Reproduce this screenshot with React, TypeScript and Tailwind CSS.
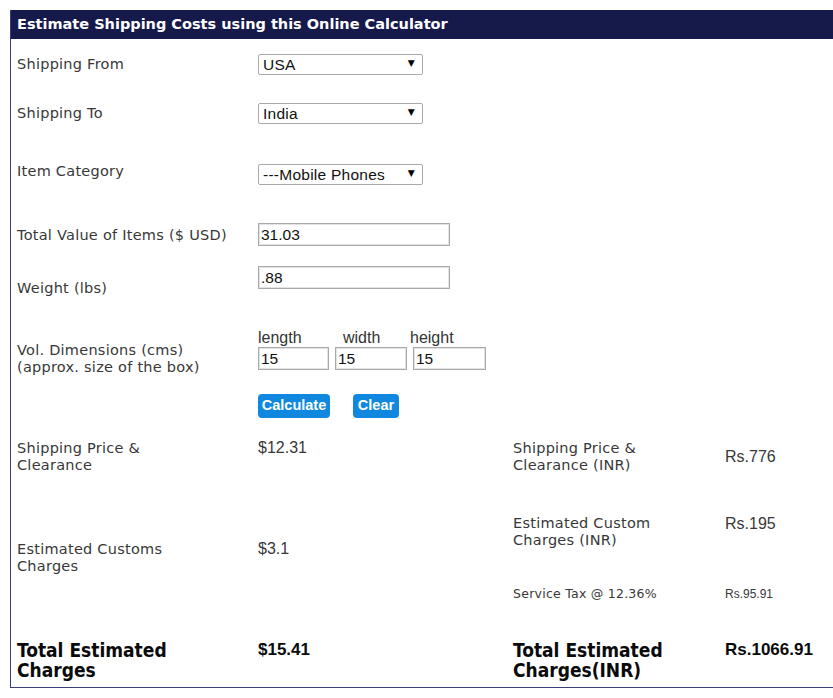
import React from 'react';

const verdana = { fontFamily: '"DejaVu Sans", Verdana, sans-serif' };

function Select({ value }: { value: string }) {
  return (
    <div className="relative w-[165px] h-[21px]">
      <select
        defaultValue={value}
        className="appearance-none w-full h-full border border-[#a9a9a9] rounded-[2px] bg-white pl-[4px] text-[15.5px] leading-[19px] text-[#111] font-['Liberation_Sans',Arial,sans-serif] outline-none"
      >
        <option>{value}</option>
      </select>
      <span className="absolute right-[8px] top-[5px] text-[9px] leading-none text-black pointer-events-none">▼</span>
    </div>
  );
}

function TextInput({ value, w }: { value: string; w: string }) {
  return (
    <input
      defaultValue={value}
      className={`${w} h-[23px] border border-[#a9a9a9] shadow-[inset_0_0_0_1px_#e3e3e3] bg-white pl-[2px] text-[15.5px] leading-[21px] text-[#111] font-['Liberation_Sans',Arial,sans-serif] outline-none`}
    />
  );
}

export default function App() {
  return (
    <div className="w-[833px] h-[698px] overflow-hidden bg-white">
      <div className="mt-[10px] ml-[10px] w-[900px] border border-t-0 border-[#3a3e78]">
        {/* Header */}
        <div className="h-[29px] bg-[#161a4b] flex items-center pl-[6px]">
          <span className="text-white font-bold text-[14.5px]" style={verdana}>
            Estimate Shipping Costs using this Online Calculator
          </span>
        </div>

        <div className="pl-[6px] text-[#383838] text-[14.5px] tracking-[0.25px]" style={verdana}>
          {/* Form rows */}
          <div className="flex h-[45px] items-start">
            <div className="w-[241px] mt-[16px] leading-[18px]">Shipping From</div>
            <div className="mt-[15px]"><Select value="USA" /></div>
          </div>
          <div className="flex h-[60px] items-start">
            <div className="w-[241px] mt-[20px] leading-[18px]">Shipping To</div>
            <div className="mt-[19px]"><Select value="India" /></div>
          </div>
          <div className="flex h-[66px] items-start">
            <div className="w-[241px] mt-[18px] leading-[18px]">Item Category</div>
            <div className="mt-[20px]"><Select value="---Mobile Phones" /></div>
          </div>
          <div className="flex h-[45px] items-start">
            <div className="w-[241px] mt-[16px] leading-[18px]">Total Value of Items ($ USD)</div>
            <div className="mt-[13px] tracking-normal"><TextInput value="31.03" w="w-[192px]" /></div>
          </div>
          <div className="flex h-[60px] items-start">
            <div className="w-[241px] mt-[24px] leading-[18px]">Weight (lbs)</div>
            <div className="mt-[11px] tracking-normal"><TextInput value=".88" w="w-[192px]" /></div>
          </div>
          <div className="flex h-[70px] items-start">
            <div className="w-[241px] mt-[27px] leading-[17px]">
              Vol. Dimensions (cms)
              <br />
              (approx. size of the box)
            </div>
            <div className="mt-[14px] flex gap-[6px] tracking-normal font-['Liberation_Sans',Arial,sans-serif] text-[16px] text-[#333]">
              <div className="flex flex-col">
                <span className="leading-[18px]">length</span>
                <TextInput value="15" w="w-[71px]" />
              </div>
              <div className="flex flex-col">
                <span className="leading-[18px] pl-[8px]">width</span>
                <TextInput value="15" w="w-[72px]" />
              </div>
              <div className="flex flex-col">
                <span className="leading-[18px] -ml-[3px]">height</span>
                <TextInput value="15" w="w-[73px]" />
              </div>
            </div>
          </div>
          <div className="flex h-[55px] items-start">
            <div className="w-[241px]" />
            <div className="mt-[9px] flex gap-[23px] tracking-normal font-['Liberation_Sans',Arial,sans-serif]">
              <button className="h-[24px] w-[72px] rounded-[4px] bg-[#1088e0] text-white font-bold text-[14.5px]">Calculate</button>
              <button className="h-[24px] w-[46px] rounded-[4px] bg-[#1088e0] text-white font-bold text-[14.5px]">Clear</button>
            </div>
          </div>

          {/* Results */}
          <div className="flex pb-[7px]">
            <div className="w-[496px] flex flex-col">
              <div className="flex h-[101px] items-start">
                <div className="w-[241px] leading-[17px]">Shipping Price &amp;<br />Clearance</div>
                <div className="-mt-[1px] text-[16px] leading-[17px] tracking-normal font-['Liberation_Sans',Arial,sans-serif]">$12.31</div>
              </div>
              <div className="flex h-[99px] items-start">
                <div className="w-[241px] leading-[17px]">Estimated Customs<br />Charges</div>
                <div className="-mt-[1px] text-[16px] leading-[17px] tracking-normal font-['Liberation_Sans',Arial,sans-serif]">$3.1</div>
              </div>
              <div className="flex h-[40px] items-start text-[#0a0a0a] tracking-normal">
                <div className="w-[241px] font-bold text-[19px] leading-[20px] font-['DejaVu_Sans_Condensed','DejaVu_Sans',sans-serif]">
                  Total Estimated<br />Charges
                </div>
                <div className="font-bold text-[17px] leading-[20px] font-['Liberation_Sans',Arial,sans-serif]">$15.41</div>
              </div>
            </div>

            <div className="flex flex-col">
              <div className="flex h-[75px] items-start">
                <div className="w-[212px] leading-[17px]">Shipping Price &amp;<br />Clearance (INR)</div>
                <div className="h-[34px] flex items-center text-[16px] tracking-normal font-['Liberation_Sans',Arial,sans-serif]">Rs.776</div>
              </div>
              <div className="flex h-[71px] items-start">
                <div className="w-[212px] leading-[17px]">Estimated Custom<br />Charges (INR)</div>
                <div className="text-[16px] leading-[17px] tracking-normal font-['Liberation_Sans',Arial,sans-serif]">Rs.195</div>
              </div>
              <div className="flex h-[54px] items-start">
                <div className="w-[212px] text-[12.5px] leading-[15px]">Service Tax @ 12.36%</div>
                <div className="mt-[1px] text-[12px] leading-[15px] tracking-normal font-['Liberation_Sans',Arial,sans-serif]">Rs.95.91</div>
              </div>
              <div className="flex h-[40px] items-start text-[#0a0a0a] tracking-normal">
                <div className="w-[212px] font-bold text-[19px] leading-[20px] font-['DejaVu_Sans_Condensed','DejaVu_Sans',sans-serif]">
                  Total Estimated<br />Charges(INR)
                </div>
                <div className="font-bold text-[17px] leading-[20px] font-['Liberation_Sans',Arial,sans-serif]">Rs.1066.91</div>
              </div>
            </div>
          </div>
        </div>
      </div>
    </div>
  );
}
